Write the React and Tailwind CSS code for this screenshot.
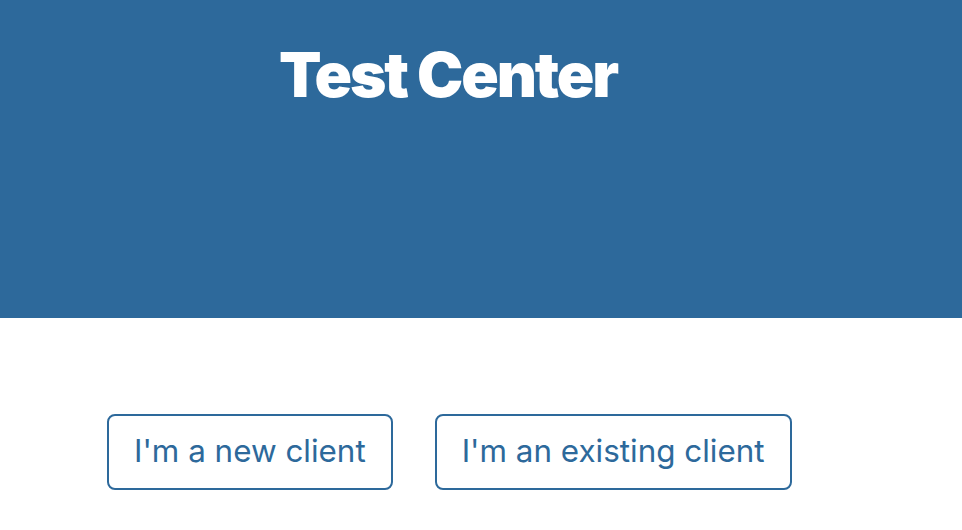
export default function App() {
  return (
    <div className="min-h-screen bg-white" style={{ fontFamily: 'Inter, "Noto Sans", sans-serif' }}>
      <header className="h-[318px] bg-[#2d699b]">
        <div className="pl-[279px] pt-[40px]">
          <h1 className="text-[62px] leading-[70px] font-black tracking-[-0.035em] text-white">Test Center</h1>
        </div>
      </header>
      <main className="flex gap-[42px] pl-[107px] pt-[96px]">
        <button type="button" className="h-[76px] px-[25px] rounded-lg border-2 border-[#2d699b] text-[31.4px] text-[#2d699b]">
          I'm a new client
        </button>
        <button type="button" className="h-[76px] px-[25px] rounded-lg border-2 border-[#2d699b] text-[31.4px] text-[#2d699b]">
          I'm an existing client
        </button>
      </main>
    </div>
  );
}
